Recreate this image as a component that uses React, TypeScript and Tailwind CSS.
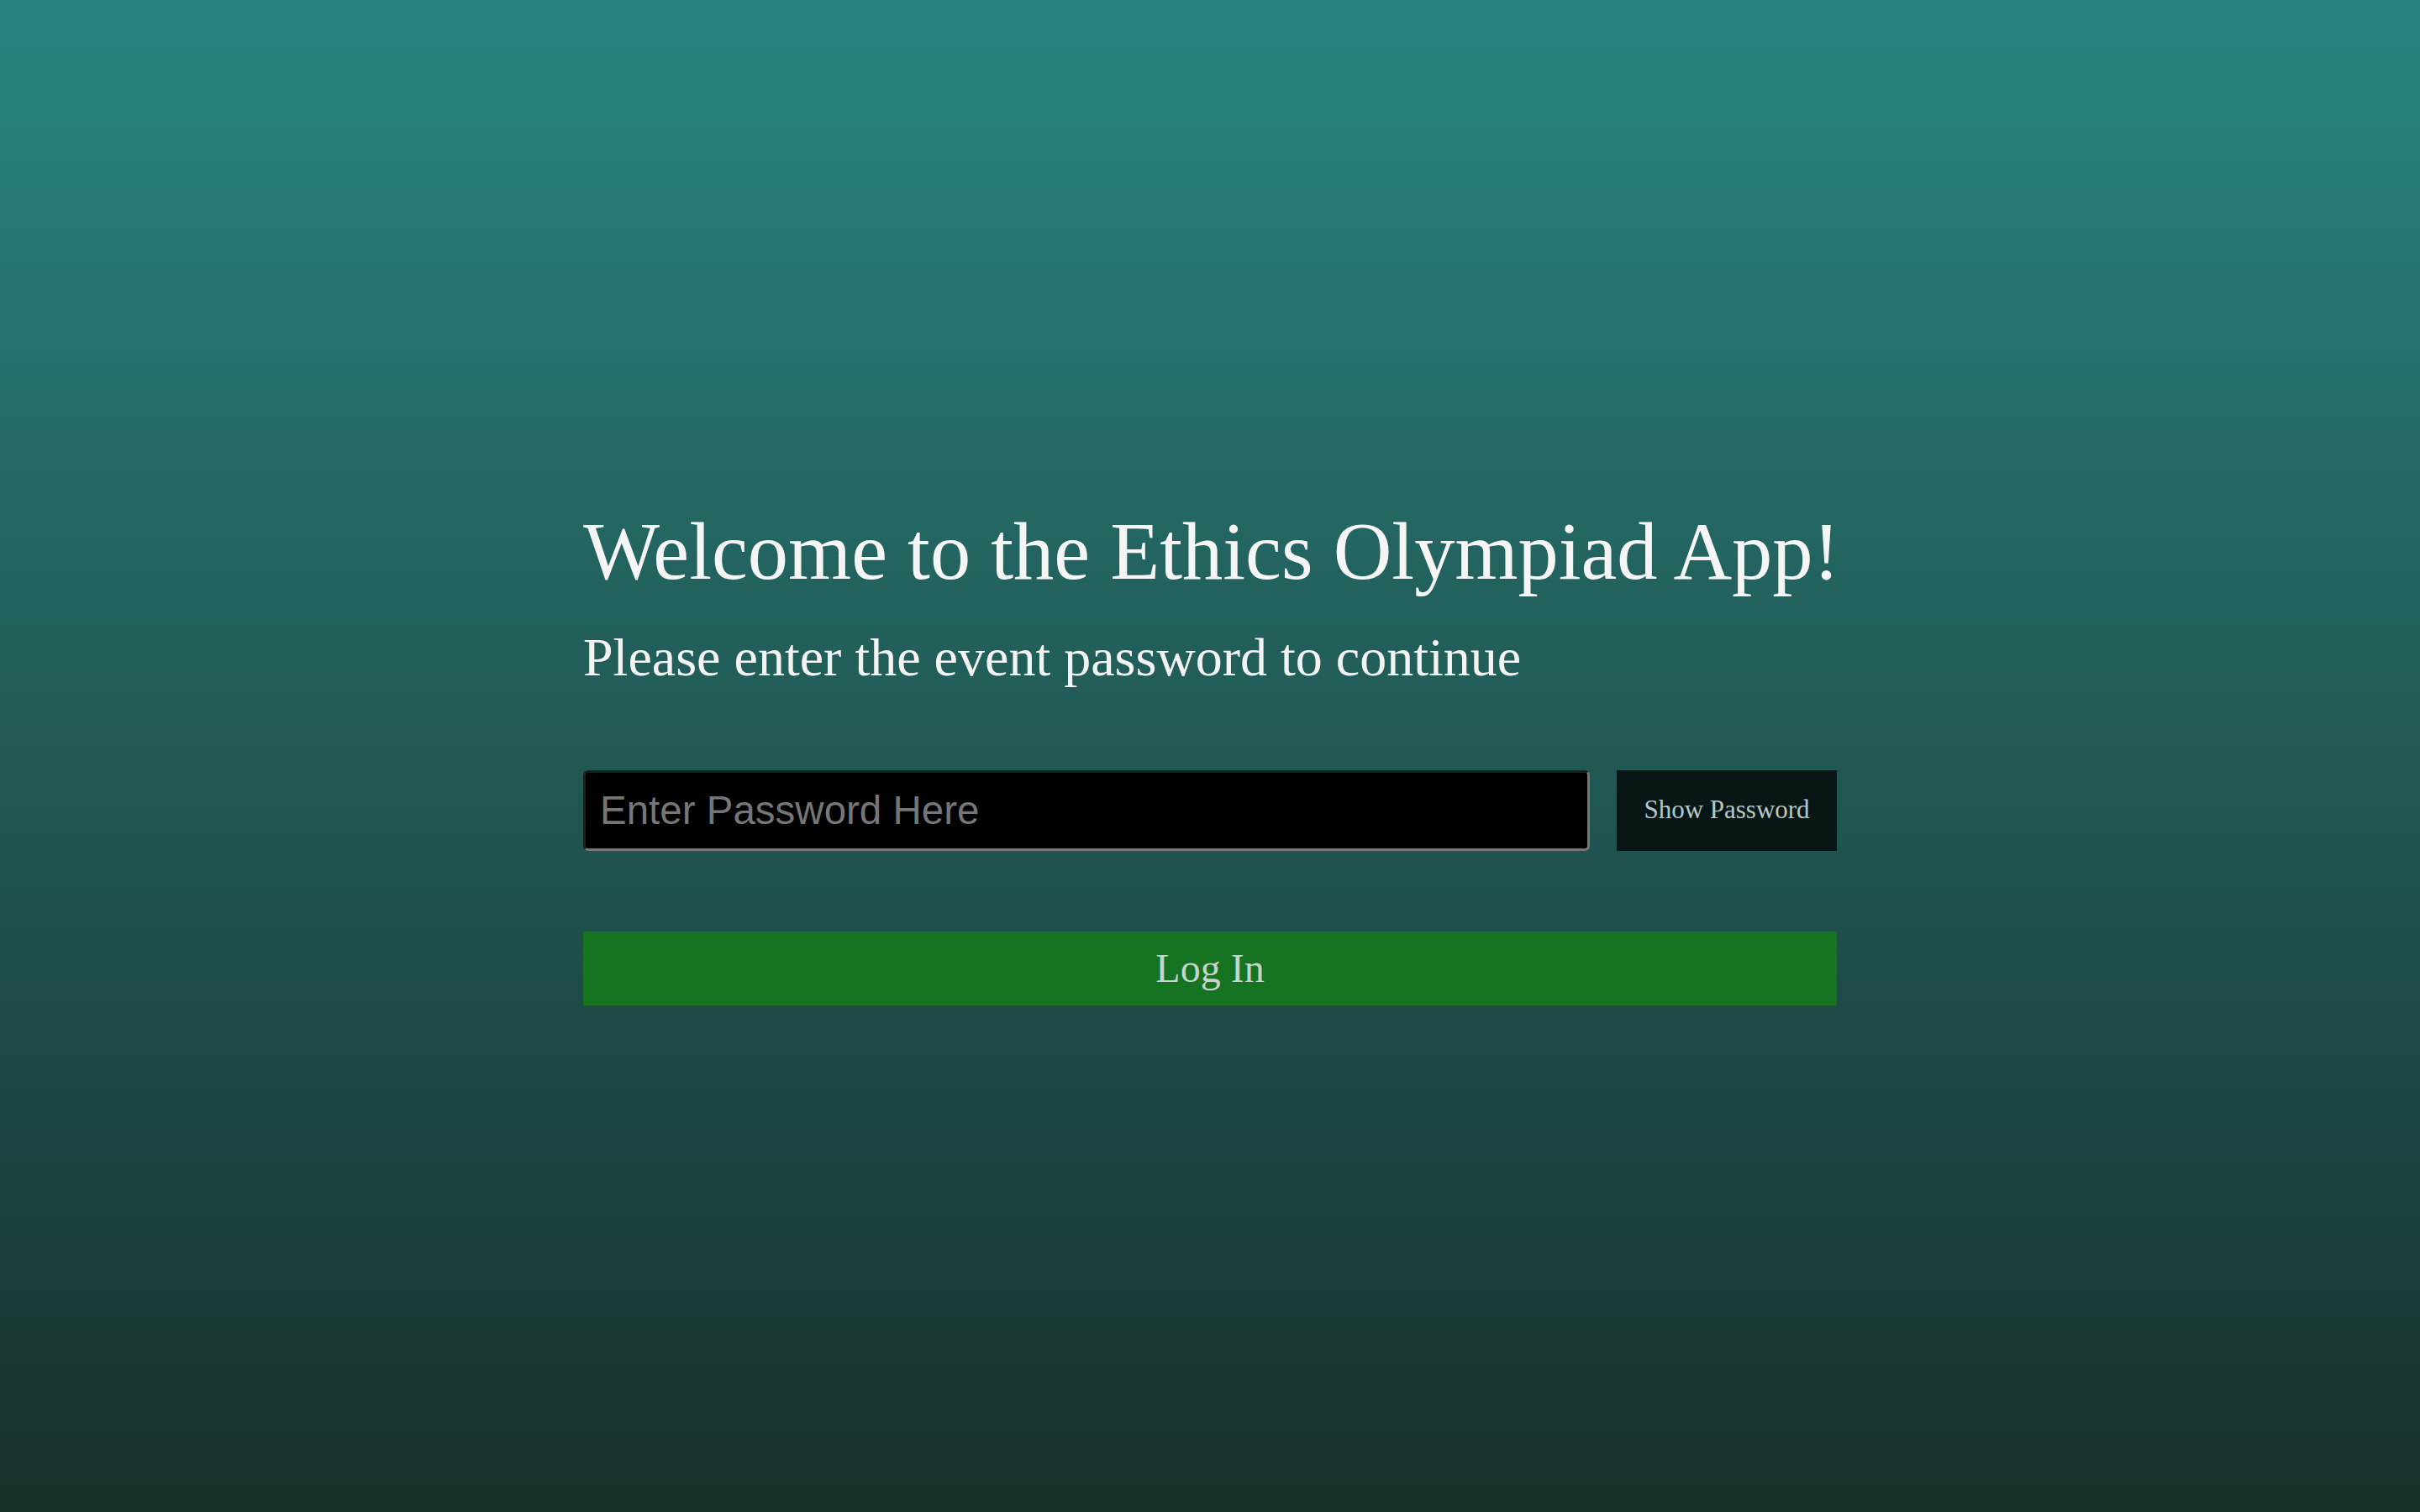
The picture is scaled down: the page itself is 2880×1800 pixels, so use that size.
import React, { useState } from "react";

const serif = "font-['Liberation_Serif',_'Times_New_Roman',_serif]";

export default function App() {
  const [show, setShow] = useState(false);
  const [password, setPassword] = useState("");

  return (
    <div className="h-screen w-full flex items-center justify-center bg-linear-to-b from-[#278581] to-[#17302c]">
      <div className={`w-[1492px] flex flex-col ${serif}`}>
        <h1 className="text-[96.5px] leading-[105px] text-[#f5f5f5] whitespace-nowrap">
          Welcome to the Ethics Olympiad App!
        </h1>
        <p className="mt-[38px] text-[64px] leading-[71px] text-[#f3f3f3]">
          Please enter the event password to continue
        </p>
        <div className="mt-[99px] h-[96px] flex gap-[32px]">
          <input
            type={show ? "text" : "password"}
            value={password}
            onChange={(e) => setPassword(e.target.value)}
            placeholder="Enter Password Here"
            className="flex-1 h-full bg-black rounded-[6px] border-[3px] border-t-[#1e1e1e] border-l-[#1e1e1e] border-b-[#777777] border-r-[#777777] pl-[17px] text-[47.5px] text-white font-['Liberation_Sans',_Arial,_sans-serif] placeholder:text-[#767676] outline-none"
          />
          <button
            onClick={() => setShow(!show)}
            className="w-[262px] h-full bg-[#081716] text-[#b9c8c4] text-[31px]"
          >
            Show Password
          </button>
        </div>
        <button className="mt-[96px] h-[88px] w-full bg-[#157321] text-[#c6d4cc] text-[48px]">
          Log In
        </button>
      </div>
    </div>
  );
}
